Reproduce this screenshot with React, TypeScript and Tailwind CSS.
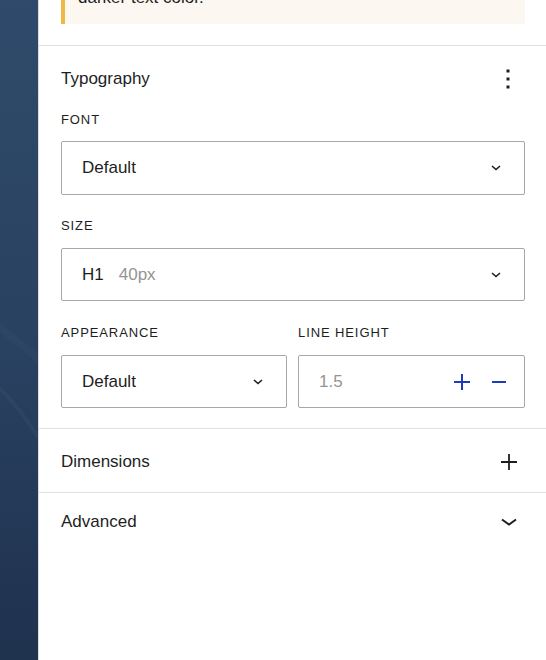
import React from "react";

function Chevron({ className }: { className?: string }) {
  return (
    <svg className={className} width="10" height="6" viewBox="0 0 10 6" fill="none">
      <path d="M1 1l4 3.5L9 1" stroke="#1e1e1e" strokeWidth="1.6" />
    </svg>
  );
}

function SelectBox({ children, tall }: { children: React.ReactNode; tall?: boolean }) {
  return (
    <div
      className={`flex items-center justify-between rounded-[2px] border border-[#a7a7a7] bg-white pl-[20px] pr-[23px] text-[17px] text-[#1e1e1e] ${
        tall ? "h-[54px]" : "h-[53px]"
      }`}
    >
      <div className="flex items-center">{children}</div>
      <Chevron />
    </div>
  );
}

function Label({ children }: { children: React.ReactNode }) {
  return (
    <div className="text-[13px] leading-[16px] tracking-[0.9px] uppercase text-[#1e1e1e]">
      {children}
    </div>
  );
}

export default function App() {
  return (
    <div
      className="flex h-[660px] w-[546px] overflow-hidden bg-white"
      style={{ fontFamily: '"Liberation Sans", Arial, sans-serif' }}
    >
      <div className="relative w-[38px] shrink-0 bg-gradient-to-b from-[#2f4a6a] via-[#2a4262] to-[#1f324e]">
        <svg className="absolute left-0 top-[300px]" width="38" height="160" viewBox="0 0 38 160">
          <path d="M-10 80 Q 15 100 40 140" stroke="#ffffff" strokeOpacity="0.03" strokeWidth="4" fill="none" />
          <path d="M-10 20 Q 15 40 40 60" stroke="#ffffff" strokeOpacity="0.02" strokeWidth="8" fill="none" />
        </svg>
      </div>
      <div className="flex min-w-0 flex-1 flex-col border-l border-[#dcdcdc]">
        <div className="pb-[21px] pl-[22px] pr-[21px]">
          <div className="-mt-[28px] flex border-l-[4px] border-[#f0b849] bg-[#fcf7f0] py-[14px] pl-[13px] text-[17px] leading-[24px] text-[#1e1e1e]">
            darker text color.
          </div>
        </div>

        <div className="border-t border-[#e0e0e0] pb-[20px] pl-[22px] pr-[21px] pt-[21px]">
          <div className="flex items-center justify-between">
            <div className="text-[17px] leading-[24px] text-[#1e1e1e]">Typography</div>
            <svg width="4" height="20" viewBox="0 0 4 20" className="mr-[15px]">
              <rect x="0.5" y="0.5" width="3" height="3" fill="#1e1e1e" />
              <rect x="0.5" y="8.5" width="3" height="3" fill="#1e1e1e" />
              <rect x="0.5" y="16.5" width="3" height="3" fill="#1e1e1e" />
            </svg>
          </div>

          <div className="mt-[21px] flex flex-col gap-[13px]">
            <Label>Font</Label>
            <SelectBox tall>Default</SelectBox>
          </div>

          <div className="mt-[23px] flex flex-col gap-[14px]">
            <Label>Size</Label>
            <SelectBox>
              <span>H1</span>
              <span className="ml-[15px] text-[#949494]">40px</span>
            </SelectBox>
          </div>

          <div className="mt-[24px] grid grid-cols-[226px_1fr] gap-[11px]">
            <div className="flex flex-col gap-[14px]">
              <Label>Appearance</Label>
              <SelectBox>Default</SelectBox>
            </div>
            <div className="flex flex-col gap-[14px]">
              <Label>Line height</Label>
              <div className="flex h-[53px] items-center justify-between rounded-[2px] border border-[#a7a7a7] bg-white pl-[20px] pr-[18px] text-[17px] text-[#949494]">
                <span>1.5</span>
                <div className="flex items-center gap-[22px]">
                  <svg width="16" height="16" viewBox="0 0 16 16">
                    <path d="M8 0v16M0 8h16" stroke="#1e3bbd" strokeWidth="2" />
                  </svg>
                  <svg width="14" height="16" viewBox="0 0 14 16">
                    <path d="M0 8h14" stroke="#1e3bbd" strokeWidth="2" />
                  </svg>
                </div>
              </div>
            </div>
          </div>
        </div>

        <div className="flex items-center justify-between border-t border-[#e0e0e0] pb-[18px] pl-[22px] pr-[21px] pt-[21px]">
          <div className="text-[17px] leading-[24px] text-[#1e1e1e]">Dimensions</div>
          <svg width="16" height="16" viewBox="0 0 16 16" className="mr-[8px]">
            <path d="M8 0v16M0 8h16" stroke="#1e1e1e" strokeWidth="1.8" />
          </svg>
        </div>

        <div className="flex items-center justify-between border-t border-[#e0e0e0] pl-[22px] pr-[21px] pt-[17px]">
          <div className="text-[17px] leading-[24px] text-[#1e1e1e]">Advanced</div>
          <svg width="16" height="8" viewBox="0 0 16 8" className="mr-[8px]">
            <path d="M1 1.5l7 5 7-5" stroke="#1e1e1e" strokeWidth="2" fill="none" />
          </svg>
        </div>
      </div>
    </div>
  );
}
